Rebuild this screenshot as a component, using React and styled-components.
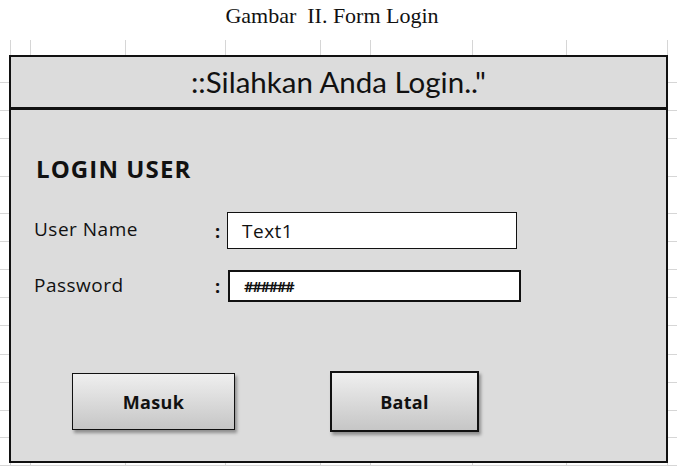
import React from 'react'
import styled, { createGlobalStyle } from 'styled-components'

const GlobalStyle = createGlobalStyle`
  html, body {
    margin: 0;
    padding: 0;
    background: #ffffff;
  }
`

// column and row lines of the worksheet behind the form
const colLines = [10, 30, 125, 225, 320, 370, 472, 566, 667]
const rowLines = [42, 70, 98, 136, 173, 201, 229, 257, 285, 314, 342, 370, 397, 425]

const Page = styled.div`
  width: 677px;
  height: 466px;
  overflow: hidden;
  display: flex;
  flex-direction: column;
`

const Caption = styled.div`
  height: 40px;
  box-sizing: border-box;
  padding: 3px 13px 0 0;
  text-align: center;
  font-family: "Liberation Serif", "Times New Roman", serif;
  font-size: 22px;
  color: #111;
  white-space: pre;
`

const Sheet = styled.div`
  position: relative;
  flex: 1;
  padding: 15px 9px 0 9px;
`

const Grid = styled.svg`
  position: absolute;
  left: 0;
  top: 0;
  width: 677px;
  height: 426px;
  z-index: 0;
`

const Form = styled.div`
  position: relative;
  z-index: 1;
  width: 659px;
  height: 408px;
  box-sizing: border-box;
  border: 2px solid #111;
  background: #dcdcdc;
  display: flex;
  flex-direction: column;
  font-family: "Open Sans", Lato, sans-serif;
  color: #111;
`

const Header = styled.div`
  height: 53px;
  border-bottom: 3px solid #111;
  display: flex;
  align-items: center;
  justify-content: center;
  font-family: Lato, "Open Sans", sans-serif;
  font-size: 29.5px;
  padding-bottom: 2px;
  box-sizing: border-box;
`

const Body = styled.div`
  padding: 46px 0 0 25px;
  display: flex;
  flex-direction: column;
`

const Title = styled.div`
  font-size: 24px;
  font-weight: 700;
  letter-spacing: 1.1px;
  line-height: 26px;
  margin-bottom: 30px;
`

const Row = styled.div`
  display: flex;
  align-items: center;
  margin-bottom: ${p => p.gap || 0}px;
`

const Label = styled.div`
  width: 181px;
  font-size: 19px;
  letter-spacing: 0.5px;
  margin-left: -2px;
  margin-top: -3px;
`

const Colon = styled.span`
  width: ${p => p.w}px;
  font-size: 18px;
  font-weight: 700;
`

const Field = styled.div`
  width: ${p => p.w}px;
  height: ${p => p.h}px;
  box-sizing: border-box;
  border: ${p => p.b}px solid #111;
  background: #fff;
  display: flex;
  align-items: center;
  padding-left: 14px;
  font-size: 19px;
  letter-spacing: 0.5px;
`

const Hashes = styled.span`
  letter-spacing: -1.5px;
  font-size: 15px;
  font-weight: 700;
`

const Buttons = styled.div`
  display: flex;
  align-items: center;
  margin-top: 69px;
  padding-left: 36px;
`

const Button = styled.div`
  width: ${p => p.w}px;
  height: ${p => p.h}px;
  margin-right: ${p => p.mr || 0}px;
  box-sizing: border-box;
  border: ${p => p.b}px solid #111;
  background: linear-gradient(#efefef, #c6c6c6);
  box-shadow: 2px 3px 3px rgba(0, 0, 0, 0.35);
  display: flex;
  align-items: center;
  justify-content: center;
  font-size: 18px;
  font-weight: 700;
  letter-spacing: 0.3px;
`

export default function App() {
  return (
    <Page>
      <GlobalStyle />
      <Caption>Gambar  II. Form Login</Caption>
      <Sheet>
        <Grid viewBox="0 0 677 426">
          {colLines.map(x => (
            <line key={'c' + x} x1={x + 0.5} y1="0" x2={x + 0.5} y2="426" stroke="#d6d6d6" />
          ))}
          {rowLines.map(y => (
            <line key={'r' + y} x1="0" y1={y + 0.5} x2="677" y2={y + 0.5} stroke="#d6d6d6" />
          ))}
        </Grid>
        <Form>
          <Header>::Silahkan Anda Login.."</Header>
          <Body>
            <Title>LOGIN USER</Title>
            <Row gap={21}>
              <Label>User Name</Label>
              <Colon w={12}>:</Colon>
              <Field w={290} h={37} b={1.5}>Text1</Field>
            </Row>
            <Row>
              <Label>Password</Label>
              <Colon w={13}>:</Colon>
              <Field w={293} h={32} b={2}>
                <Hashes>######</Hashes>
              </Field>
            </Row>
            <Buttons>
              <Button w={163} h={57} b={1.5} mr={95}>Masuk</Button>
              <Button w={149} h={61} b={2.5}>Batal</Button>
            </Buttons>
          </Body>
        </Form>
      </Sheet>
    </Page>
  )
}
